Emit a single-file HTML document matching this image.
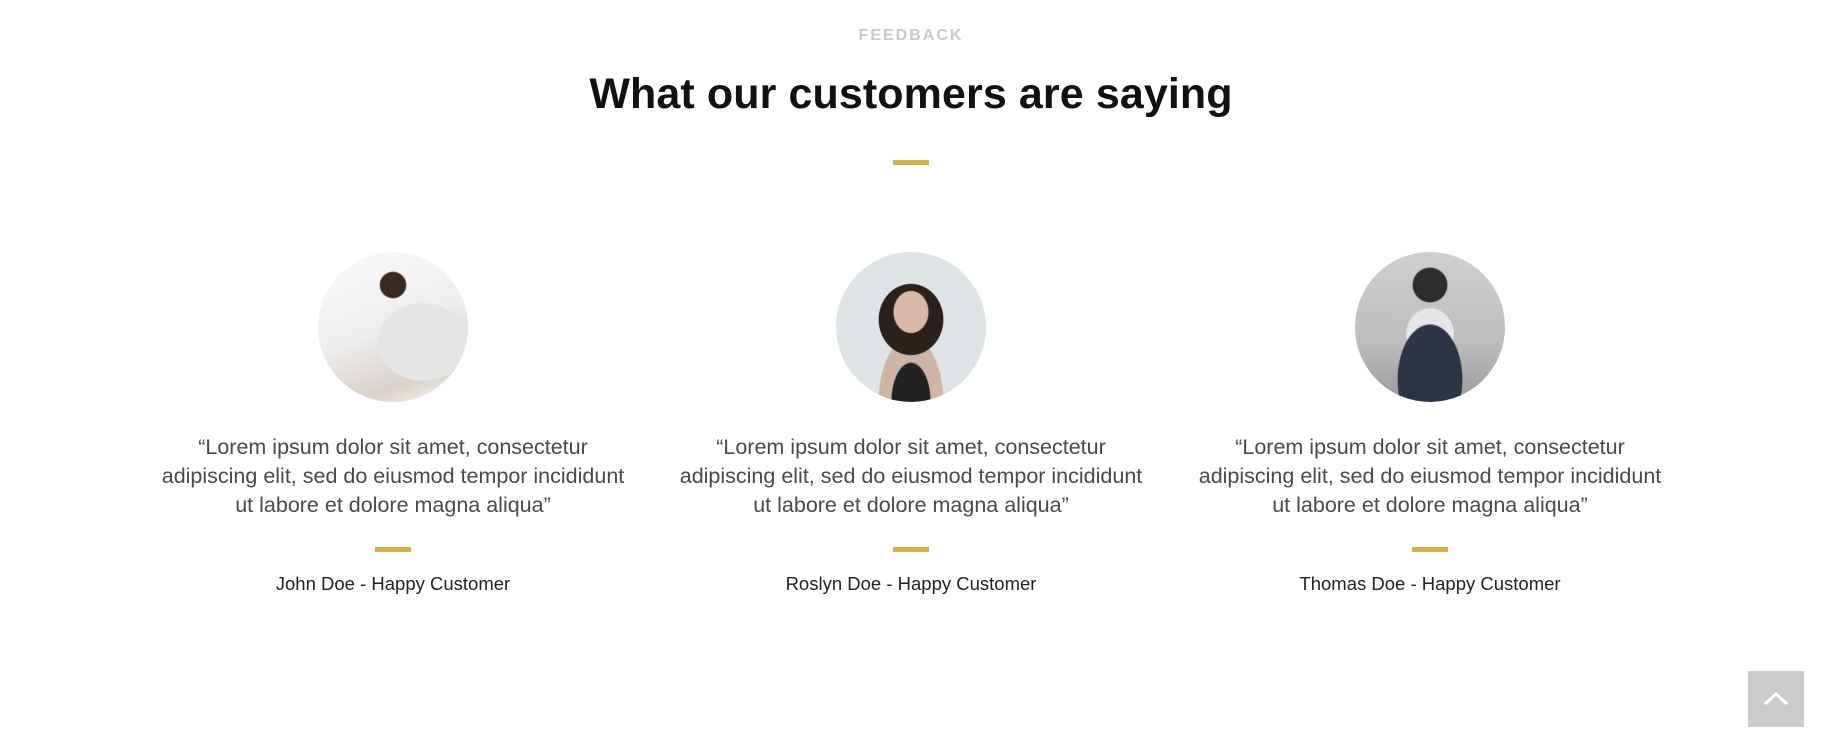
<!DOCTYPE html>
<html><head><meta charset="utf-8"><style>
body{margin:0;width:1829px;height:751px;background:#fff;font-family:"Liberation Sans",sans-serif;position:relative;overflow:hidden}
.a{position:absolute;text-align:center}
.fb{left:0;width:1822px;top:27px;font-size:16px;font-weight:bold;letter-spacing:2px;color:#c8c8c8}
.h{left:0;width:1822px;top:70px;font-size:43px;font-weight:bold;color:#111;letter-spacing:0.1px}
.bar{position:absolute;background:#d4b04f;height:5px;width:36px}
.col{position:absolute;top:0;width:500px}
.av{position:absolute;left:175px;top:252px;width:150px;height:150px;border-radius:50%;overflow:hidden}
.q{position:absolute;left:-20px;width:540px;top:433px;font-size:21.5px;line-height:29px;color:#4a4a4a;text-align:center;font-weight:300}
.n{position:absolute;left:0;width:500px;top:573px;font-size:18.5px;color:#222;text-align:center}
.up{position:absolute;left:1748px;top:671px;width:56px;height:56px;background:#cbcbcb}
</style></head><body>
<div class="a fb">FEEDBACK</div>
<div class="a h">What our customers are saying</div>
<div class="bar" style="left:893px;top:160px"></div>

<div class="col" style="left:143px">
<div class="av" style="background:radial-gradient(circle at 50% 22%,#3a2a22 0 9%,transparent 10%),radial-gradient(ellipse at 70% 60%,#e6e6e6 0 30%,transparent 31%),linear-gradient(160deg,#fafafa,#eee 50%,#d9d0c8 80%,#fff)"></div>
<div class="q">“Lorem ipsum dolor sit amet, consectetur<br>adipiscing elit, sed do eiusmod tempor incididunt<br>ut labore et dolore magna aliqua”</div>
<div class="bar" style="left:232px;top:547px"></div>
<div class="n">John Doe - Happy Customer</div>
</div>

<div class="col" style="left:661px">
<div class="av" style="background:radial-gradient(ellipse at 50% 40%,#d9b8a8 0 16%,transparent 17%),radial-gradient(ellipse at 50% 45%,#2a201c 0 30%,transparent 31%),radial-gradient(ellipse at 50% 100%,#222 0 18%,#cfb5a8 19% 30%,transparent 31%),#dfe5e6"></div>
<div class="q">“Lorem ipsum dolor sit amet, consectetur<br>adipiscing elit, sed do eiusmod tempor incididunt<br>ut labore et dolore magna aliqua”</div>
<div class="bar" style="left:232px;top:547px"></div>
<div class="n">Roslyn Doe - Happy Customer</div>
</div>

<div class="col" style="left:1180px">
<div class="av" style="background:radial-gradient(circle at 50% 22%,#2e2c2c 0 12%,transparent 13%),radial-gradient(ellipse at 50% 85%,#2c3446 0 30%,transparent 31%),radial-gradient(ellipse at 50% 55%,#e6e6e6 0 22%,transparent 23%),linear-gradient(180deg,#cfcfcf,#bdbdbd 60%,#9a9a9a)"></div>
<div class="q">“Lorem ipsum dolor sit amet, consectetur<br>adipiscing elit, sed do eiusmod tempor incididunt<br>ut labore et dolore magna aliqua”</div>
<div class="bar" style="left:232px;top:547px"></div>
<div class="n">Thomas Doe - Happy Customer</div>
</div>

<div class="up"><svg width="56" height="56"><path d="M17 33 L28 23 L39 33" stroke="#fff" stroke-width="3" fill="none"/></svg></div>
</body></html>
